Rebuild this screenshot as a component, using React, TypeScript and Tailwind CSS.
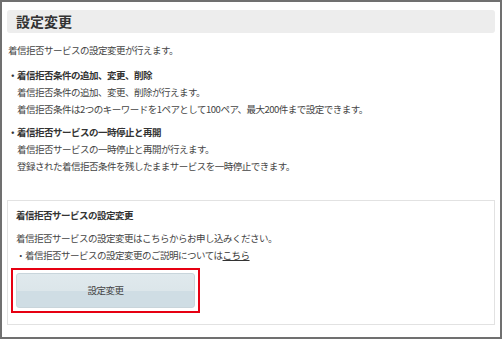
import React from "react";

export default function App() {
  const font = { fontFamily: '"Noto Sans CJK JP", "Noto Sans", sans-serif' };
  return (
    <div
      className="w-[502px] h-[339px] bg-white border-[2px] border-[#707070] text-[#444] text-[9.5px] tracking-[-0.5px] leading-[17px]"
      style={font}
    >
      <div className="mx-[5px] mt-[8px] h-[23px] bg-[#ededed] rounded-[3px] px-[9px] flex items-center">
        <span className="text-[14px] font-bold text-[#333] tracking-normal">設定変更</span>
      </div>
      <div className="px-[6px]">
        <p className="mt-[9px]">着信拒否サービスの設定変更が行えます。</p>
        <div className="mt-[8px]">
          <p className="font-bold text-[#333]">・着信拒否条件の追加、変更、削除</p>
          <div className="pl-[9px]">
            <p>着信拒否条件の追加、変更、削除が行えます。</p>
            <p>着信拒否条件は2つのキーワードを1ペアとして100ペア、最大200件まで設定できます。</p>
          </div>
        </div>
        <div className="mt-[6px]">
          <p className="font-bold text-[#333]">・着信拒否サービスの一時停止と再開</p>
          <div className="pl-[9px]">
            <p>着信拒否サービスの一時停止と再開が行えます。</p>
            <p>登録された着信拒否条件を残したままサービスを一時停止できます。</p>
          </div>
        </div>
      </div>
      <div className="mx-[5px] mt-[25px] h-[125px] border border-[#e2e2e2] px-[8px] pt-[6px]">
        <p className="font-bold text-[#333]">着信拒否サービスの設定変更</p>
        <p className="mt-[6px]">着信拒否サービスの設定変更はこちらからお申し込みください。</p>
        <p>
          ・着信拒否サービスの設定変更のご説明については
          <span className="underline text-[#333]">こちら</span>
        </p>
        <div className="mt-[4px] ml-[-5px] w-[189px] border-[2px] border-[#e60012] p-[3px]">
          <div className="h-[35px] rounded-[3px] border border-[#c9d5db] bg-[linear-gradient(to_bottom,#e0e9ed_0%,#dce6ea_50%,#cfdde4_50%,#cfdde4_100%)] flex items-center justify-center text-[#444]">
            設定変更
          </div>
        </div>
      </div>
    </div>
  );
}
